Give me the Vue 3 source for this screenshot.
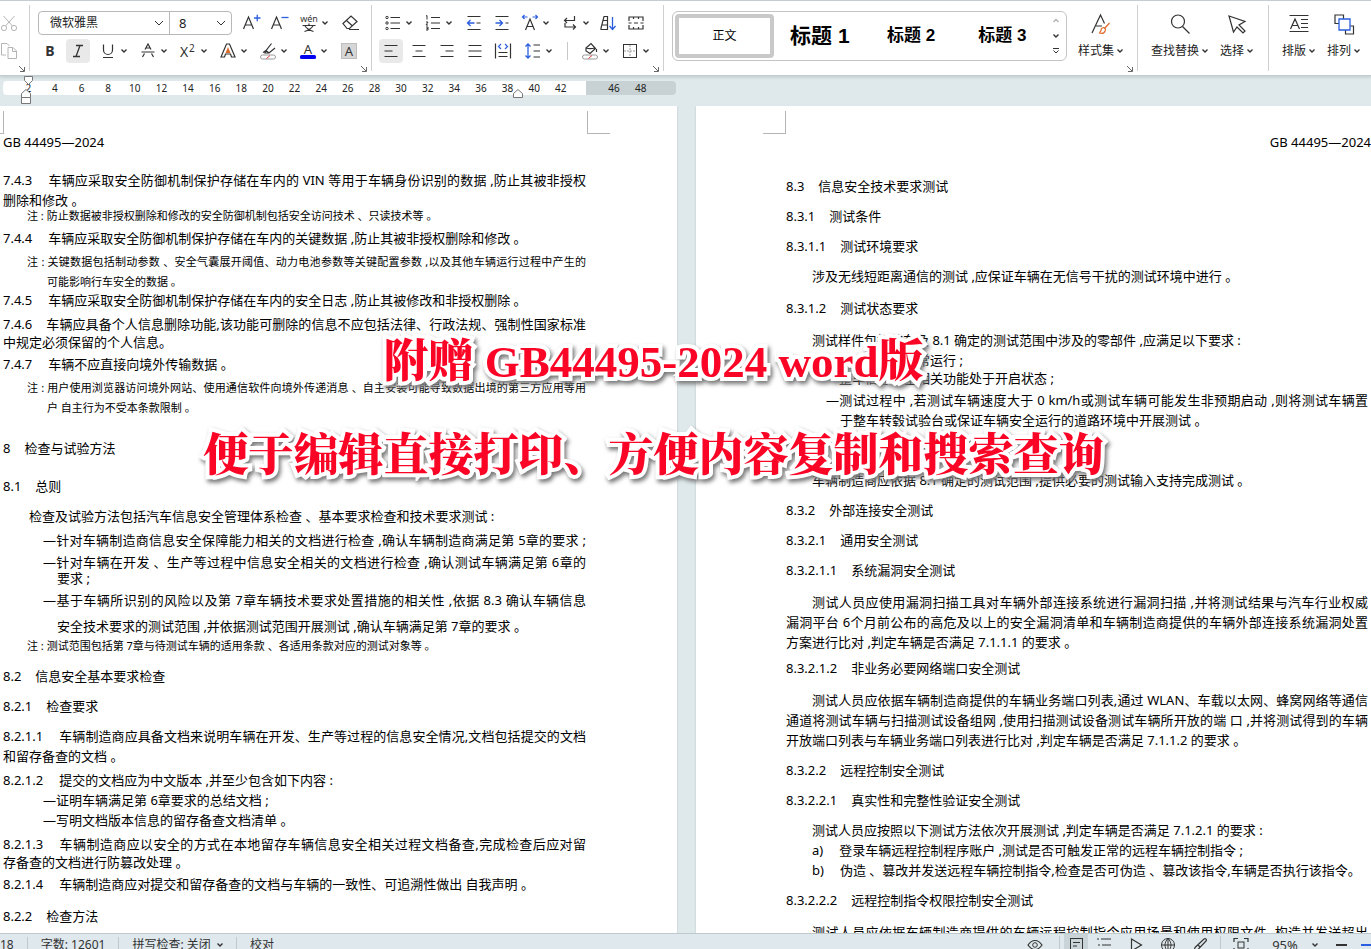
<script setup>
import { ref } from 'vue'

const font = ref('微软雅黑')
const size = ref('8')

const icons = {
  cut: '<g stroke="#b4b4b4"><circle cx="5" cy="15" r="2.6"/><circle cx="15" cy="15" r="2.6"/><path d="M4.5 3L13.5 13M15.5 3L6.500 13"/></g>',
  copy: '<g stroke="#b4b4b4"><path d="M7 14H2.500V2.500H8L10.500 5M9 6.500h5l3.500 3.500v7.500H9zM13.500 7v3.500H17"/></g>',
  grow: '<path stroke-width="1.200" d="M2.500 16L7.500 4l5 12M4.500 12h6"/><path stroke="#2b5fe0" stroke-width="1.300" d="M13 5h6.500M16.250 1.750v6.500"/>',
  shrink: '<path stroke-width="1.200" d="M2.500 16L7.500 4l5 12M4.500 12h6"/><path stroke="#2b5fe0" stroke-width="1.300" d="M12.500 4.500h7"/>',
  pinyin: '<text x="10" y="9" font-size="9" text-anchor="middle">wén</text><path stroke-width="1.200" d="M3.500 12.500h13M10 10.500v2M6 13c2 3 5 4.500 8.500 5.500M14 13c-2 3-5 4.500-8.500 5.500"/>',
  eraser: '<path stroke-width="1.200" d="M3 10.500L11 3l6 5.500-7.500 7H7zM6.500 7.500l6 5.500M9 16.500h10"/>',
  bold: '<text x="10" y="15" font-size="14" font-weight="700" text-anchor="middle">B</text>',
  italic: '<path stroke-width="1.300" d="M8 4.500h7M5 15.500h7M12 4.500L8 15.500"/>',
  underline: '<path stroke-width="1.200" d="M5.500 3.500v5.500a4.500 4.500 0 0 0 9 0V3.500M5 16.500h10"/>',
  strike: '<path stroke-width="1.200" d="M7 8.500L10 3l3 5.500M8 7h4M3.500 11h13M6.500 12.500L4.500 16M13.500 12.500L15.500 16"/>',
  super: '<text x="2" y="16" font-size="14">X</text><text x="11" y="11" font-size="10">2</text>',
  outline: '<path stroke-width="1.200" d="M3 16L8.500 3h3L17 16h-3.500l-1-3h-5l-1 3z"/><path fill="#e06a2b" stroke="none" d="M10 6l2.500 6h-5z"/>',
  marker: '<path stroke-width="1.200" d="M5 11.500l3-2 5.500-7M8 9.500l3 2.500 6-5M8 9.500l-1 2.500h3.500l.5 0"/><rect x="2.500" y="14" width="15" height="4" rx="2" stroke="#999"/><path stroke="#e03c3c" d="M8.500 17.500l3.500-3"/>',
  color: '<text x="10" y="12.500" font-size="13" text-anchor="middle">A</text><rect x="2" y="14" width="16" height="4" rx="1.500" fill="#0000f0" stroke="none"/>',
  shade: '<rect x="2.500" y="2.500" width="15" height="15" fill="#d6d6d6" stroke="#bdbdbd"/><text x="10" y="15" font-size="13" text-anchor="middle">A</text>',
  bullets: '<path stroke-width="1.200" d="M7.500 4.500H17M7.500 10H17M7.500 15.500H17"/><circle cx="4" cy="4.500" r="1.200"/><circle cx="4" cy="10" r="1.200"/><circle cx="4" cy="15.500" r="1.200"/>',
  numbers: '<path stroke-width="1.200" d="M8 4.500H17M8 10H17M8 15.500H17"/><path d="M3 3l1-.5v4M3 9h2l-2 3h2M3 14h2v3H3M3.500 15.500H5"/>',
  outdent: '<path stroke-width="1.200" d="M3.500 3.500h13M12.500 10h4M3.500 16.500h13"/><path stroke="#2b5fe0" stroke-width="1.300" d="M3.500 10h7M6.500 7l-3 3 3 3"/>',
  indent: '<path stroke-width="1.200" d="M3.500 3.500h13M13.500 10h3M3.500 16.500h13"/><path stroke="#2b5fe0" stroke-width="1.300" d="M3.500 10h7M7.500 7l3 3-3 3"/>',
  widen: '<path stroke-width="1.200" d="M5.500 17L10 6l4.500 11M7 13.500h6"/><path stroke="#2b5fe0" stroke-width="1.200" d="M2.500 4h5M12.500 4h5M4.500 2l-2 2 2 2M15.500 2l2 2-2 2"/>',
  wrap: '<path stroke-width="1.200" d="M14.500 3v4.500H4.500M7 5L4.500 7.500 7 10M5 10v4h10.500M13 11.500l2.500 2.500-2.500 2.500"/>',
  sort: '<path stroke-width="1.200" d="M3 16.500V15L6 3.500h3.500v13zM5 7.500h4M4 12h5"/><path stroke="#2b5fe0" stroke-width="1.300" d="M14.500 4v12M11.500 13l3 3.500 3-3.500"/>',
  grid: '<path stroke-width="1.200" d="M3 8V4h14v4M3 12v4h14v-4M7.500 4v2M12.500 4v2M7.500 14v2M12.500 14v2M2.500 10h3M8 10h4M14.500 10h3"/>',
  left: '<path stroke-width="1.200" d="M3.500 4.500h13M3.500 10h8M3.500 15.500h13"/>',
  center: '<path stroke-width="1.200" d="M3.500 4.500h13M6.500 10h7M3.500 15.500h13"/>',
  right: '<path stroke-width="1.200" d="M3.500 4.500h13M8.500 10h8M3.500 15.500h13"/>',
  justify: '<path stroke-width="1.200" d="M3.500 4.500h13M3.500 10h13M3.500 15.500h13"/>',
  spread: '<path stroke-width="1.200" d="M2.500 2.500v15M17.500 2.500v15M5.500 11.500h9M5.500 15.500h9"/><path stroke="#2b5fe0" stroke-width="1.200" d="M8 3L5.500 5.500 8 8M12 3l2.500 2.500L12 8"/>',
  spacing: '<path stroke-width="1.200" d="M10.500 4h6.500M10.500 10h6.500M10.500 16h6.500"/><path stroke="#2b5fe0" stroke-width="1.300" d="M5 3v14M2.500 5.500L5 3l2.500 2.500M2.500 14.500L5 17l2.500-2.500"/>',
  bucket: '<path stroke-width="1.200" d="M6 7l5-4.500 4.500 5-5.500 5-4-2.500zM6 7c3 1 5 1 9 0M16.500 8v3"/><rect x="2.500" y="14" width="15" height="4" rx="2" stroke="#999"/><path stroke="#e03c3c" d="M8.500 17.500l3.500-3"/>',
  border: '<rect x="3.500" y="3.500" width="13" height="13"/><path stroke="#999" stroke-dasharray="2 1" d="M10 4v12M4 10h12"/>',
  styleset: '<path stroke-width="1.200" d="M2 20L10.500 2l4 8.500M6 13h6"/><path stroke="#e06a2b" stroke-width="1.200" d="M19.500 10l-4.500 5M14 14.500c-2 0-3 1-3 3l-1.500 2.500c3 1 6 0 6-4z"/>',
  search: '<circle cx="9" cy="8.500" r="6.500" stroke-width="1.200"/><path stroke-width="1.200" d="M13.500 13.500l7 7"/>',
  cursor: '<path stroke-width="1.200" d="M3 3l16 5.500-6 3.500 6 6-2 2-6-6-3.500 5z"/>',
  typeset: '<path stroke-width="1.200" d="M1.500 2.500h19M1.500 18.500h19M13 6.500h7M13 10.500h7M13 14.500h7M2.500 16L7 6l4.500 10M4 12.500h6"/>',
  arrange: '<path stroke-width="1.200" d="M6 10.500H2V2h8.500v4M17 13h3.500v8h-8v-4"/><path stroke="#2b5fe0" stroke-width="1.300" d="M6 6h11v11H6z"/>',
  eye: '<path stroke-width="1.200" d="M3 10c4-6 10-6 14 0-4 6-10 6-14 0z"/><circle cx="10" cy="10" r="2.300"/>',
  page: '<rect x="4.500" y="3.500" width="12" height="14"/><path d="M7 7.500h7M7 11h4"/>',
  outlineview: '<path d="M7 4h10M8 10h9M8 16h9M3 4h2M4 10h2M4 16h2"/>',
  play: '<path stroke-width="1.200" d="M5.500 4l10 6-10 6z"/>',
  globe: '<circle cx="10" cy="10" r="6.500"/><path d="M3.500 10h13M10 3.500v13M10 3.500c-4 4-4 9 0 13M10 3.500c4 4 4 9 0 13"/>',
  pen: '<path stroke-width="1.200" d="M5 12.500L14 4c2-1 3 1 2 2l-8.500 9-3.500 2zM8 10l2.500 2.500"/>',
  fit: '<path stroke-width="1.200" d="M3 7V3.500h4M13 3.500h4V7M17 13v3.500h-4M7 16.500H3V13"/><rect x="7" y="7" width="6" height="6"/>'
}

const fontRow = [
  { i: 'bold', n: '加粗' }, { i: 'italic', n: '倾斜', on: true }, { i: 'underline', n: '下划线', c: true },
  { i: 'strike', n: '删除线', c: true }, { i: 'super', n: '上标', c: true }, { i: 'outline', n: '文字效果', c: true },
  { i: 'marker', n: '突出显示', c: true }, { i: 'color', n: '字体颜色', c: true }, { i: 'shade', n: '字符底纹', pad: true }
]
const sizeRow = [
  { i: 'grow', n: '增大字号' }, { i: 'shrink', n: '减小字号' }, { i: 'pinyin', n: '拼音指南', c: true }, { i: 'eraser', n: '清除格式', pad: true }
]
const paraTop = [
  { i: 'bullets', n: '项目符号', c: true }, { i: 'numbers', n: '编号', c: true }, { i: 'outdent', n: '减少缩进', pad: true },
  { i: 'indent', n: '增加缩进' }, { i: 'widen', n: '中文版式', c: true, pad: true }, { i: 'wrap', n: '换行', c: true },
  { i: 'sort', n: '排序' }, { i: 'grid', n: '制表位' }
]
const paraLow = [
  { i: 'left', n: '左对齐', on: true }, { i: 'center', n: '居中' }, { i: 'right', n: '右对齐' }, { i: 'justify', n: '两端对齐' },
  { i: 'spread', n: '分散对齐' }, { i: 'spacing', n: '行距', c: true }, { sep: true },
  { i: 'bucket', n: '底纹', c: true }, { i: 'border', n: '边框', c: true }
]
const ticks = Array.from({ length: 24 }, (_, k) => (k === 21 ? '' : String((k + 1) * 2)))

// g: space above, d: indent, n: clause number, k: kind, f: spans the full measure
const leftLines = [
  { g: 22, n: '7.4.3', t: '车辆应采取安全防御机制保护存储在车内的 VIN 等用于车辆身份识别的数据 ,防止其被非授权', f: 1 },
  { g: 4, t: '删除和修改 。' },
  { g: 0, d: 24, k: 'note', t: '注 : 防止数据被非授权删除和修改的安全防御机制包括安全访问技术 、只读技术等 。' },
  { g: 6, n: '7.4.4', t: '车辆应采取安全防御机制保护存储在车内的关键数据 ,防止其被非授权删除和修改 。' },
  { g: 8, d: 24, k: 'note', t: '注 : 关键数据包括制动参数 、安全气囊展开阈值、动力电池参数等关键配置参数 ,以及其他车辆运行过程中产生的', f: 1 },
  { g: 4, d: 44, k: 'note', t: '可能影响行车安全的数据 。' },
  { g: 2, n: '7.4.5', t: '车辆应采取安全防御机制保护存储在车内的安全日志 ,防止其被修改和非授权删除 。' },
  { g: 8, n: '7.4.6', t: '车辆应具备个人信息删除功能,该功能可删除的信息不应包括法律、行政法规、强制性国家标准', f: 1, tight: 1 },
  { g: 2, t: '中规定必须保留的个人信息。' },
  { g: 6, n: '7.4.7', t: '车辆不应直接向境外传输数据 。' },
  { g: 8, d: 24, k: 'note', t: '注 : 用户使用浏览器访问境外网站、使用通信软件向境外传递消息 、自主安装可能导致数据出境的第三方应用等用', f: 1 },
  { g: 4, d: 44, k: 'note', t: '户 自主行为不受本条款限制 。' },
  { g: 24, n: '8', k: 'head', t: '检查与试验方法' },
  { g: 22, n: '8.1', k: 'head', t: '总则' },
  { g: 14, d: 26, t: '检查及试验方法包括汽车信息安全管理体系检查 、基本要求检查和技术要求测试 :' },
  { g: 8, d: 40, t: '—针对车辆制造商信息安全保障能力相关的文档进行检查 ,确认车辆制造商满足第 5章的要求 ;', f: 1 },
  { g: 6, d: 40, t: '—针对车辆在开发 、生产等过程中信息安全相关的文档进行检查 ,确认测试车辆满足第 6章的', f: 1 },
  { g: 0, d: 54, t: '要求 ;' },
  { g: 6, d: 40, t: '—基于车辆所识别的风险以及第 7章车辆技术要求处置措施的相关性 ,依据 8.3 确认车辆信息', f: 1 },
  { g: 10, d: 54, t: '安全技术要求的测试范围 ,并依据测试范围开展测试 ,确认车辆满足第 7章的要求 。' },
  { g: 4, d: 24, k: 'note', t: '注 : 测试范围包括第 7章与待测试车辆的适用条款 、各适用条款对应的测试对象等 。' },
  { g: 14, n: '8.2', k: 'head', t: '信息安全基本要求检查' },
  { g: 14, n: '8.2.1', k: 'head', t: '检查要求' },
  { g: 14, n: '8.2.1.1', t: '车辆制造商应具备文档来说明车辆在开发、生产等过程的信息安全情况,文档包括提交的文档', f: 1 },
  { g: 4, t: '和留存备查的文档 。' },
  { g: 8, n: '8.2.1.2', t: '提交的文档应为中文版本 ,并至少包含如下内容 :' },
  { g: 4, d: 40, t: '—证明车辆满足第 6章要求的总结文档 ;' },
  { g: 4, d: 40, t: '—写明文档版本信息的留存备查文档清单 。' },
  { g: 8, n: '8.2.1.3', t: '车辆制造商应以安全的方式在本地留存车辆信息安全相关过程文档备查,完成检查后应对留', f: 1 },
  { g: 2, t: '存备查的文档进行防篡改处理 。' },
  { g: 6, n: '8.2.1.4', t: '车辆制造商应对提交和留存备查的文档与车辆的一致性、可追溯性做出 自我声明 。' },
  { g: 16, n: '8.2.2', k: 'head', t: '检查方法' }
]
const rightLines = [
  { g: 28, n: '8.3', k: 'head', t: '信息安全技术要求测试' },
  { g: 14, n: '8.3.1', k: 'head', t: '测试条件' },
  { g: 14, n: '8.3.1.1', k: 'head', t: '测试环境要求' },
  { g: 14, d: 26, t: '涉及无线短距离通信的测试 ,应保证车辆在无信号干扰的测试环境中进行 。' },
  { g: 16, n: '8.3.1.2', k: 'head', t: '测试状态要求' },
  { g: 16, d: 26, t: '测试样件包括整车及 8.1 确定的测试范围中涉及的零部件 ,应满足以下要求 :' },
  { g: 4, d: 40, t: '—测试样件可正常运行 ;' },
  { g: 2, d: 40, t: '—整车信息安全相关功能处于开启状态 ;' },
  { g: 6, d: 40, t: '—测试过程中 ,若测试车辆速度大于 0 km/h或测试车辆可能发生非预期启动 ,则将测试车辆置', f: 1 },
  { g: 4, d: 54, t: '于整车转毂试验台或保证车辆安全运行的道路环境中开展测试 。' },
  { g: 14, n: '8.3.1.3', k: 'head', t: '测试输入' },
  { g: 14, d: 26, t: '车辆制造商应依据 8.1 确定的测试范围 ,提供必要的测试输入支持完成测试 。' },
  { g: 14, n: '8.3.2', k: 'head', t: '外部连接安全测试' },
  { g: 14, n: '8.3.2.1', k: 'head', t: '通用安全测试' },
  { g: 14, n: '8.3.2.1.1', k: 'head', t: '系统漏洞安全测试' },
  { g: 16, d: 26, t: '测试人员应使用漏洞扫描工具对车辆外部连接系统进行漏洞扫描 ,并将测试结果与汽车行业权威', f: 1 },
  { g: 4, t: '漏洞平台 6个月前公布的高危及以上的安全漏洞清单和车辆制造商提供的车辆外部连接系统漏洞处置', f: 1 },
  { g: 4, t: '方案进行比对 ,判定车辆是否满足 7.1.1.1 的要求 。' },
  { g: 10, n: '8.3.2.1.2', k: 'head', t: '非业务必要网络端口安全测试' },
  { g: 16, d: 26, t: '测试人员应依据车辆制造商提供的车辆业务端口列表,通过 WLAN、车载以太网、蜂窝网络等通信', f: 1 },
  { g: 4, t: '通道将测试车辆与扫描测试设备组网 ,使用扫描测试设备测试车辆所开放的端 口 ,并将测试得到的车辆', f: 1 },
  { g: 4, t: '开放端口列表与车辆业务端口列表进行比对 ,判定车辆是否满足 7.1.1.2 的要求 。' },
  { g: 14, n: '8.3.2.2', k: 'head', t: '远程控制安全测试' },
  { g: 14, n: '8.3.2.2.1', k: 'head', t: '真实性和完整性验证安全测试' },
  { g: 14, d: 26, t: '测试人员应按照以下测试方法依次开展测试 ,判定车辆是否满足 7.1.2.1 的要求 :' },
  { g: 4, d: 26, n: 'a)', t: '登录车辆远程控制程序账户 ,测试是否可触发正常的远程车辆控制指令 ;' },
  { g: 4, d: 26, n: 'b)', t: '伪造 、篡改并发送远程车辆控制指令,检查是否可伪造 、篡改该指令,车辆是否执行该指令。' },
  { g: 14, n: '8.3.2.2.2', k: 'head', t: '远程控制指令权限控制安全测试' },
  { g: 16, d: 26, t: '测试人员应依据车辆制造商提供的车辆远程控制指令应用场景和使用权限文件 ,构造并发送超出', f: 1 }
]
const pages = [
  { cls: 'page-left', lines: leftLines },
  { cls: 'page-right', lines: rightLines }
]
const lineClass = (l) => [`g${l.g}`, `d${l.d || 0}`, l.k, { full: l.f, tight: l.tight }]
</script>

<template>
  <div class="app">
    <header class="ribbon">
      <section class="group clip">
        <div class="row"><button class="tool" aria-label="剪切"><svg viewBox="0 0 20 20" v-html="icons.cut"></svg></button></div>
        <div class="row"><button class="tool" aria-label="复制"><svg viewBox="0 0 20 20" v-html="icons.copy"></svg></button></div>
        <svg class="launch" viewBox="0 0 8 8"><path d="M1 1l5 5M6.500 2v4.500H2" /></svg>
      </section>
      <section class="group fonts">
        <div class="row">
          <div class="combo">
            <label class="pick pick-font">
              <select v-model="font" aria-label="字体"><option>微软雅黑</option></select>
              <svg class="chev" viewBox="0 0 10 6"><path d="M1 1l4 4 4-4" /></svg>
            </label>
            <label class="pick pick-size">
              <select v-model="size" aria-label="字号"><option>8</option></select>
              <svg class="chev" viewBox="0 0 10 6"><path d="M1 1l4 4 4-4" /></svg>
            </label>
          </div>
          <button v-for="b in sizeRow" :key="b.i" class="tool" :class="{ split: b.c, pad: b.pad }" :aria-label="b.n">
            <svg viewBox="0 0 20 20" v-html="icons[b.i]"></svg>
            <svg v-if="b.c" class="caret" viewBox="0 0 6 4"><path d="M0.500 0.500L3 3l2.500-2.500" /></svg>
          </button>
        </div>
        <div class="row">
          <button v-for="b in fontRow" :key="b.i" class="tool" :class="{ split: b.c, on: b.on, pad: b.pad }" :aria-label="b.n">
            <svg viewBox="0 0 20 20" v-html="icons[b.i]"></svg>
            <svg v-if="b.c" class="caret" viewBox="0 0 6 4"><path d="M0.500 0.500L3 3l2.500-2.500" /></svg>
          </button>
        </div>
        <svg class="launch" viewBox="0 0 8 8"><path d="M1 1l5 5M6.500 2v4.500H2" /></svg>
      </section>
      <section class="group paras">
        <div v-for="(r, k) in [paraTop, paraLow]" :key="k" class="row">
          <template v-for="(b, j) in r" :key="j">
            <span v-if="b.sep" class="bar"></span>
            <button v-else class="tool" :class="{ split: b.c, on: b.on, pad: b.pad }" :aria-label="b.n">
              <svg viewBox="0 0 20 20" v-html="icons[b.i]"></svg>
              <svg v-if="b.c" class="caret" viewBox="0 0 6 4"><path d="M0.500 0.500L3 3l2.500-2.500" /></svg>
            </button>
          </template>
        </div>
        <svg class="launch" viewBox="0 0 8 8"><path d="M1 1l5 5M6.500 2v4.500H2" /></svg>
      </section>
      <section class="group styles">
        <div class="gallery">
          <button class="style chosen">正文</button>
          <button class="style h1">标题 1</button>
          <button class="style h2">标题 2</button>
          <button class="style h2">标题 3</button>
          <div class="scroll">
            <button aria-label="上一行"><svg class="caret faint" viewBox="0 0 6 4"><path d="M0.500 3L3 0.500 5.500 3" /></svg></button>
            <button aria-label="下一行"><svg class="caret" viewBox="0 0 6 4"><path d="M0.500 0.500L3 3l2.500-2.500" /></svg></button>
            <button aria-label="更多样式"><svg class="more" viewBox="0 0 6 6"><path d="M0 0.500h6M0.500 2.500L3 5l2.500-2.500" /></svg></button>
          </div>
        </div>
        <button class="big styleset"><svg viewBox="0 0 22 22" v-html="icons.styleset"></svg><span>样式集<svg class="caret" viewBox="0 0 6 4"><path d="M0.500 0.500L3 3l2.500-2.500" /></svg></span></button>
        <svg class="launch" viewBox="0 0 8 8"><path d="M1 1l5 5M6.500 2v4.500H2" /></svg>
      </section>
      <section class="group find">
        <button class="big"><svg viewBox="0 0 22 22" v-html="icons.search"></svg><span>查找替换<svg class="caret" viewBox="0 0 6 4"><path d="M0.500 0.500L3 3l2.500-2.500" /></svg></span></button>
        <button class="big"><svg viewBox="0 0 22 22" v-html="icons.cursor"></svg><span>选择<svg class="caret" viewBox="0 0 6 4"><path d="M0.500 0.500L3 3l2.500-2.500" /></svg></span></button>
      </section>
      <section class="group sort">
        <button class="big"><svg viewBox="0 0 22 22" v-html="icons.typeset"></svg><span>排版<svg class="caret" viewBox="0 0 6 4"><path d="M0.500 0.500L3 3l2.500-2.500" /></svg></span></button>
        <button class="big"><svg viewBox="0 0 22 22" v-html="icons.arrange"></svg><span>排列<svg class="caret" viewBox="0 0 6 4"><path d="M0.500 0.500L3 3l2.500-2.500" /></svg></span></button>
      </section>
    </header>

    <div class="rulers">
      <div class="ruler">
        <span v-for="(t, k) in ticks" :key="k">{{ t }}</span>
        <svg class="mark first" viewBox="0 0 12 30"><path d="M2.500 1.500h8v4l-4 4-4-4z" /></svg>
        <svg class="mark hang" viewBox="0 0 12 30"><path d="M1.500 22.500v-4l4.500-4 4.500 4v4zM1.500 22.500h9v6h-9z" /></svg>
        <svg class="mark end" viewBox="0 0 12 30"><path d="M1.500 22.500v-4l4.500-4 4.500 4v4z" /></svg>
      </div>
    </div>

    <main class="desk">
      <article v-for="p in pages" :key="p.cls" class="page" :class="p.cls">
        <div class="corners"><i class="corner a"></i><i class="corner b"></i></div>
        <p class="running">GB 44495—2024</p>
        <div class="body">
          <p v-for="(l, k) in p.lines" :key="k" class="line" :class="lineClass(l)"><span v-if="l.n" class="num">{{ l.n }}</span>{{ l.t }}</p>
        </div>
      </article>
      <div class="banner">
        <p>附赠 GB44495-2024 word版</p>
        <p>便于编辑直接打印、方便内容复制和搜索查询</p>
      </div>
    </main>

    <footer class="status">
      <div class="strip">
        <span class="cell pageno">18</span>
        <span class="cell">字数: 12601</span>
        <button class="cell">拼写检查: 关闭 <svg class="caret" viewBox="0 0 6 4"><path d="M0.500 0.500L3 3l2.500-2.500" /></svg></button>
        <button class="cell">校对</button>
        <div class="views">
          <button class="eye" aria-label="护眼模式"><svg viewBox="0 0 20 20" v-html="icons.eye"></svg></button>
          <i class="bar"></i>
          <button class="on" aria-label="页面视图"><svg viewBox="0 0 20 20" v-html="icons.page"></svg></button>
          <button aria-label="大纲"><svg viewBox="0 0 20 20" v-html="icons.outlineview"></svg></button>
          <button aria-label="阅读"><svg viewBox="0 0 20 20" v-html="icons.play"></svg></button>
          <button aria-label="Web 版式"><svg viewBox="0 0 20 20" v-html="icons.globe"></svg></button>
          <button aria-label="写作模式"><svg viewBox="0 0 20 20" v-html="icons.pen"></svg></button>
          <i class="bar"></i>
          <button aria-label="最佳缩放"><svg viewBox="0 0 20 20" v-html="icons.fit"></svg></button>
          <button class="zoom">95%<svg class="caret" viewBox="0 0 6 4"><path d="M0.500 0.500L3 3l2.500-2.500" /></svg></button>
          <button class="minus" aria-label="缩小"></button>
          <i class="slide"></i>
        </div>
      </div>
    </footer>
  </div>
</template>

<style>
body { margin: 0; overflow: hidden; }
</style>

<style scoped>
* { box-sizing: border-box; }
.app { height: 100vh; display: flex; flex-direction: column; overflow: hidden; background: #dfe9eb; color: #222; font: 12px/16px "Noto Sans", "Noto Sans CJK SC", sans-serif; }
p { margin: 0; }
button { border: 0; background: none; padding: 0; margin: 0; font: inherit; color: inherit; }
svg { fill: none; stroke: #333; stroke-width: 1; flex: none; overflow: visible; }
svg :deep(text) { fill: #333; stroke: none; font-family: "Noto Sans", sans-serif; }
.ribbon { flex: none; height: 76px; display: flex; background: #fff; border-top: 1px solid #c3cdd1; border-bottom: 1px solid #c5cdd0; box-shadow: 0 1px 3px #b9c5c8; position: relative; }
.group { position: relative; flex: none; padding-top: 8px; }
.group + .group::before { content: ""; position: absolute; left: 0; top: 4px; height: 66px; border-left: 1px solid #d0d0d0; }
.row { display: flex; height: 28px; align-items: center; }
.clip { width: 29px; }
.clip .tool { margin-left: -5px; }
.fonts { width: 342px; padding-left: 7px; }
.paras { width: 292px; padding-left: 6px; }
.styles { width: 474px; padding: 10px 0 0 9px; display: flex; align-items: flex-start; }
.find { width: 131px; padding: 12px 0 0 14px; display: flex; align-items: flex-start; gap: 12px; }
.sort { padding: 12px 0 0 14px; display: flex; align-items: flex-start; gap: 12px; }
.launch { position: absolute; right: 3px; bottom: 2px; width: 8px; height: 8px; }
.launch path { stroke: #666; }
.combo { display: flex; width: 194px; height: 24px; margin: 0 5px 0 2px; border: 1px solid #b8b8b8; border-radius: 4px; background: #fff; }
.pick { display: grid; align-items: center; }
.pick select { grid-area: 1 / 1; width: 100%; height: 22px; border: 0; background: none; appearance: none; outline: 0; font: inherit; color: #222; }
.pick-font { flex: 1; }
.pick-font select { padding: 0 11px; }
.pick-size { width: 62px; border-left: 1px solid #b8b8b8; }
.pick-size select { padding: 0 9px; font-size: 13px; }
.chev { grid-area: 1 / 1; justify-self: end; margin-right: 5px; width: 10px; height: 6px; pointer-events: none; }
.tool { flex: none; width: 28px; height: 24px; padding: 0 4px; display: flex; align-items: center; border-radius: 4px; }
.tool > svg:first-child { width: 20px; height: 20px; }
.split { width: 40px; padding: 0 0 0 6px; }
.split .caret { margin-left: 3px; }
.pad { margin-left: 3px; }
.split.pad { margin-left: -2px; }
.on { background: #e9e9e9; padding: 0 2px; }
.tool.on { width: 24px; margin: 0 2px; }
.bar { width: 1px; height: 18px; background: #c8c8c8; margin: 0 6px 0 10px; }
.caret { width: 6px; height: 4px; stroke-width: 1.4; }
.faint { stroke: #b0b0b0; }
.more { width: 6px; height: 6px; }
.gallery { display: flex; width: 395px; height: 50px; border: 1px solid #c4c4c4; border-radius: 6px; padding: 2px; }
.style { flex: 1 1 0; min-width: 0; white-space: nowrap; color: #000; font-family: "Liberation Sans", "Noto Sans CJK SC", sans-serif; }
.chosen { flex-basis: 8px; border: 4px solid #c9c9c9; border-radius: 4px; margin-right: -8px; }
.chosen + .style { margin-left: 8px; }
.h1 { font-size: 21px; font-weight: 700; }
.h2 { font-size: 17px; font-weight: 700; }
.scroll { width: 16px; display: flex; flex-direction: column; }
.scroll button { flex: 1; display: flex; align-items: center; justify-content: center; }
.big { display: flex; flex-direction: column; align-items: center; gap: 8px; white-space: nowrap; }
.big > svg { width: 22px; height: 22px; }
.big .caret { margin: 0 0 2px 3px; }
.styleset { margin: 2px 0 0 11px; }

.rulers { flex: none; height: 30px; padding-top: 5px; display: grid; grid-template-columns: 677fr 675fr; column-gap: 19px; }
.ruler { position: relative; display: flex; height: 14px; margin: 0 1px 0 3px; padding: 0 22px 0 12px; border-radius: 4px; background: linear-gradient(90deg, #fff 583px, #c8d2d5 583px); font-size: 10px; line-height: 14px; }
.ruler span { flex: 1 1 0; text-align: center; }
.mark { position: absolute; top: -6px; width: 12px; height: 30px; stroke: #777; }
.mark path { fill: #fff; }
.first { left: 19px; }
.hang { left: 17px; }
.end { left: 509px; }

.desk { flex: 1; min-height: 0; position: relative; overflow: hidden; display: grid; grid-template-columns: 677fr 675fr; column-gap: 19px; }
.page { min-width: 0; background: #fff; color: #000; box-shadow: 0 0 2px #b4c4c8; font-size: 13px; line-height: 16px; overflow: hidden; }
.corners { display: flex; justify-content: space-between; padding-top: 5px; }
.corner { height: 23px; width: 23px; border-bottom: 1px solid #b5b5b5; }
.page-left .a { width: 4px; border-right: 1px solid #b5b5b5; }
.page-left .b { border-left: 1px solid #b5b5b5; margin-right: 67px; }
.page-right .a { border-right: 1px solid #b5b5b5; margin-left: 67px; }
.page-right .b { visibility: hidden; }
.running { padding-left: 3px; }
.page-right .running { text-align: right; }
.page-left .body { padding: 0 91px 0 3px; }
.page-right .body { padding: 0 3px 0 90px; }
.line { white-space: nowrap; height: 16px; }
.full { text-align: justify; text-align-last: justify; }
.num { display: inline-block; margin-right: 16px; }
.tight .num { margin-right: 14px; }
.head .num { margin-right: 14px; }
.note { font-size: 11px; }
.g0 { margin-top: 0; }
.g2 { margin-top: 2px; }
.g4 { margin-top: 4px; }
.g6 { margin-top: 6px; }
.g8 { margin-top: 8px; }
.g10 { margin-top: 10px; }
.g14 { margin-top: 14px; }
.g16 { margin-top: 16px; }
.g22 { margin-top: 22px; }
.g24 { margin-top: 24px; }
.g28 { margin-top: 28px; }
.d24 { padding-left: 24px; }
.d26 { padding-left: 26px; }
.d40 { padding-left: 40px; }
.d44 { padding-left: 44px; }
.d54 { padding-left: 54px; }
.banner { position: absolute; left: 0; right: 64px; top: 226px; display: flex; flex-direction: column; gap: 34px; text-align: center; white-space: nowrap; pointer-events: none; color: #fb0526; font: 900 45px/60px "Liberation Serif", "Noto Serif CJK SC", "Noto Sans CJK SC", serif; -webkit-text-stroke: 8px #fff; paint-order: stroke fill; filter: drop-shadow(2px 3px 2px #777); }

.status { flex: none; height: 16px; overflow: hidden; background: #dfe9ed; border-top: 1px solid #bccace; }
.strip { display: flex; height: 22px; align-items: center; color: #333; }
.cell { padding: 0 13px; border-right: 1px solid #bccace; white-space: nowrap; }
.cell:nth-child(4) { border: 0; }
.pageno { padding-left: 0; }
.strip .caret { margin: 0 0 2px 3px; }
.views { margin-left: auto; display: flex; align-items: center; height: 22px; }
.views > button { width: 32px; height: 22px; display: flex; align-items: center; justify-content: center; }
.views > button > svg:first-child { width: 20px; height: 20px; }
.views .bar { margin: 0 4px; background: #bccace; }
.views .eye { margin-right: 4px; }
.views .on { width: 24px; background-color: #c9d4d8; }
.views .zoom { width: 60px; margin-left: 8px; gap: 14px; font-size: 13px; }
.views .zoom > .caret:first-child { width: 6px; height: 4px; margin: 0; }
.views .minus::after { content: ""; width: 11px; height: 2px; background: #333; }
.slide { width: 10px; height: 2px; background: #2b5fe0; margin-left: 4px; }
</style>
